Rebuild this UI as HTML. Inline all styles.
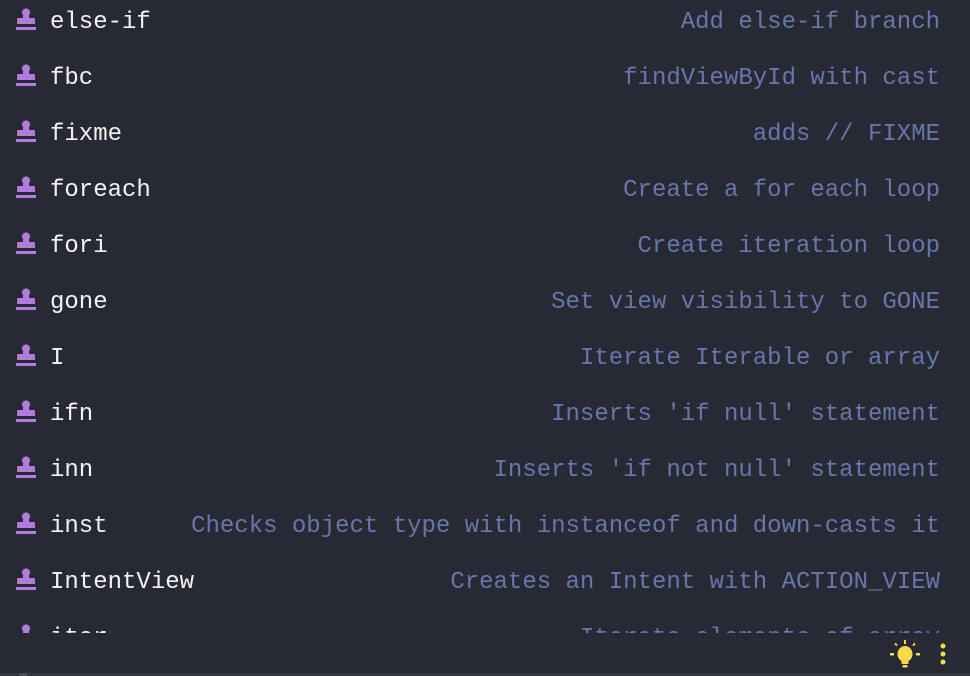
<!DOCTYPE html>
<html><head><style>
html,body{margin:0;padding:0;background:#272934;width:970px;height:676px;overflow:hidden;font-family:"Liberation Mono",monospace;}
.list{position:absolute;left:0;top:0;width:964px;height:633px;overflow:hidden}
.row{position:absolute;left:0;width:964px;height:56px}
.ic{position:absolute;left:14px;top:8px}
.n{position:absolute;left:50px;top:6px;font-size:24px;line-height:34px;color:#f2f2f2}
.d{position:absolute;right:24px;top:6px;font-size:24px;line-height:34px;color:#6876aa;white-space:pre}
.sb{position:absolute;left:964px;top:0;width:6px;height:676px;background:#292b36}
.bot{position:absolute;left:0;top:673px;width:970px;height:3px;background:#34363f}
.bot i{position:absolute;left:19px;top:0;width:8px;height:3px;background:#4a4d58}
</style></head><body>
<div class="sb"></div>
<div class="bot"><i></i></div>
<svg style="position:absolute;left:888px;top:638px" width="34" height="34" viewBox="0 0 34 34">
<g fill="#f5d94a"><ellipse cx="17" cy="16" rx="7.5" ry="8"/><rect x="13.5" y="21" width="7" height="5"/><rect x="14.5" y="27" width="5" height="2.5"/>
<rect x="16" y="2" width="2" height="4"/><rect x="2" y="15" width="4" height="2.5"/><rect x="28" y="15" width="4" height="2.5"/>
<rect x="7" y="5" width="2" height="3" transform="rotate(-40 8 6.5)"/><rect x="25" y="5" width="2" height="3" transform="rotate(40 26 6.5)"/></g></svg>
<svg style="position:absolute;left:938px;top:642px" width="10" height="26"><g fill="#f5d94a"><circle cx="5" cy="4" r="2.5"/><circle cx="5" cy="12" r="2.5"/><circle cx="5" cy="20" r="2.5"/></g></svg>
<div class="list">
<div class="row" style="top:0"><svg class="ic" width="24" height="24" viewBox="0 0 24 24"><g fill="#b07fdc"><circle cx="12" cy="4.5" r="4"/><rect x="9" y="5" width="6" height="6"/><path d="M3 11.5Q3 10 4.5 10H19.5Q21 10 21 11.5V16H3Z"/><rect x="2" y="19" width="20" height="3"/></g></svg><div class="n">else-if</div><div class="d">Add else-if branch</div></div>
<div class="row" style="top:56px"><svg class="ic" width="24" height="24" viewBox="0 0 24 24"><g fill="#b07fdc"><circle cx="12" cy="4.5" r="4"/><rect x="9" y="5" width="6" height="6"/><path d="M3 11.5Q3 10 4.5 10H19.5Q21 10 21 11.5V16H3Z"/><rect x="2" y="19" width="20" height="3"/></g></svg><div class="n">fbc</div><div class="d">findViewById with cast</div></div>
<div class="row" style="top:112px"><svg class="ic" width="24" height="24" viewBox="0 0 24 24"><g fill="#b07fdc"><circle cx="12" cy="4.5" r="4"/><rect x="9" y="5" width="6" height="6"/><path d="M3 11.5Q3 10 4.5 10H19.5Q21 10 21 11.5V16H3Z"/><rect x="2" y="19" width="20" height="3"/></g></svg><div class="n">fixme</div><div class="d">adds // FIXME</div></div>
<div class="row" style="top:168px"><svg class="ic" width="24" height="24" viewBox="0 0 24 24"><g fill="#b07fdc"><circle cx="12" cy="4.5" r="4"/><rect x="9" y="5" width="6" height="6"/><path d="M3 11.5Q3 10 4.5 10H19.5Q21 10 21 11.5V16H3Z"/><rect x="2" y="19" width="20" height="3"/></g></svg><div class="n">foreach</div><div class="d">Create a for each loop</div></div>
<div class="row" style="top:224px"><svg class="ic" width="24" height="24" viewBox="0 0 24 24"><g fill="#b07fdc"><circle cx="12" cy="4.5" r="4"/><rect x="9" y="5" width="6" height="6"/><path d="M3 11.5Q3 10 4.5 10H19.5Q21 10 21 11.5V16H3Z"/><rect x="2" y="19" width="20" height="3"/></g></svg><div class="n">fori</div><div class="d">Create iteration loop</div></div>
<div class="row" style="top:280px"><svg class="ic" width="24" height="24" viewBox="0 0 24 24"><g fill="#b07fdc"><circle cx="12" cy="4.5" r="4"/><rect x="9" y="5" width="6" height="6"/><path d="M3 11.5Q3 10 4.5 10H19.5Q21 10 21 11.5V16H3Z"/><rect x="2" y="19" width="20" height="3"/></g></svg><div class="n">gone</div><div class="d">Set view visibility to GONE</div></div>
<div class="row" style="top:336px"><svg class="ic" width="24" height="24" viewBox="0 0 24 24"><g fill="#b07fdc"><circle cx="12" cy="4.5" r="4"/><rect x="9" y="5" width="6" height="6"/><path d="M3 11.5Q3 10 4.5 10H19.5Q21 10 21 11.5V16H3Z"/><rect x="2" y="19" width="20" height="3"/></g></svg><div class="n">I</div><div class="d">Iterate Iterable or array</div></div>
<div class="row" style="top:392px"><svg class="ic" width="24" height="24" viewBox="0 0 24 24"><g fill="#b07fdc"><circle cx="12" cy="4.5" r="4"/><rect x="9" y="5" width="6" height="6"/><path d="M3 11.5Q3 10 4.5 10H19.5Q21 10 21 11.5V16H3Z"/><rect x="2" y="19" width="20" height="3"/></g></svg><div class="n">ifn</div><div class="d">Inserts 'if null' statement</div></div>
<div class="row" style="top:448px"><svg class="ic" width="24" height="24" viewBox="0 0 24 24"><g fill="#b07fdc"><circle cx="12" cy="4.5" r="4"/><rect x="9" y="5" width="6" height="6"/><path d="M3 11.5Q3 10 4.5 10H19.5Q21 10 21 11.5V16H3Z"/><rect x="2" y="19" width="20" height="3"/></g></svg><div class="n">inn</div><div class="d">Inserts 'if not null' statement</div></div>
<div class="row" style="top:504px"><svg class="ic" width="24" height="24" viewBox="0 0 24 24"><g fill="#b07fdc"><circle cx="12" cy="4.5" r="4"/><rect x="9" y="5" width="6" height="6"/><path d="M3 11.5Q3 10 4.5 10H19.5Q21 10 21 11.5V16H3Z"/><rect x="2" y="19" width="20" height="3"/></g></svg><div class="n">inst</div><div class="d">Checks object type with instanceof and down-casts it</div></div>
<div class="row" style="top:560px"><svg class="ic" width="24" height="24" viewBox="0 0 24 24"><g fill="#b07fdc"><circle cx="12" cy="4.5" r="4"/><rect x="9" y="5" width="6" height="6"/><path d="M3 11.5Q3 10 4.5 10H19.5Q21 10 21 11.5V16H3Z"/><rect x="2" y="19" width="20" height="3"/></g></svg><div class="n">IntentView</div><div class="d">Creates an Intent with ACTION_VIEW</div></div>
<div class="row" style="top:616px"><svg class="ic" width="24" height="24" viewBox="0 0 24 24"><g fill="#b07fdc"><circle cx="12" cy="4.5" r="4"/><rect x="9" y="5" width="6" height="6"/><path d="M3 11.5Q3 10 4.5 10H19.5Q21 10 21 11.5V16H3Z"/><rect x="2" y="19" width="20" height="3"/></g></svg><div class="n">iter</div><div class="d">Iterate elements of array</div></div>
</div>
</body></html>
